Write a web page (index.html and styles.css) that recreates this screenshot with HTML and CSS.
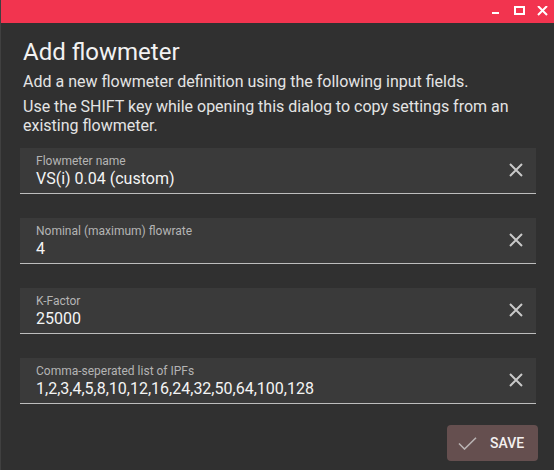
FILE: index.html
```html
<!DOCTYPE html>
<html>
<head>
<meta charset="utf-8">
<link rel="stylesheet" href="styles.css">
</head>
<body>
<div class="window">
  <div class="titlebar">
    <span class="tb-btn">
      <svg width="10" height="10" viewBox="0 0 10 10"><rect x="1" y="6" width="7" height="2" fill="#fff"/></svg>
    </span>
    <span class="tb-btn">
      <svg width="12" height="10" viewBox="0 0 12 10"><rect x="1" y="1" width="9" height="7" fill="none" stroke="#fff" stroke-width="2"/></svg>
    </span>
    <span class="tb-btn">
      <svg width="12" height="10" viewBox="0 0 12 10"><path d="M1 0 L10 9 M10 0 L1 9" stroke="#fff" stroke-width="2"/></svg>
    </span>
  </div>
  <div class="content">
    <h1 class="title">Add flowmeter</h1>
    <p class="desc">Add a new flowmeter definition using the following input fields.</p>
    <p class="desc">Use the SHIFT key while opening this dialog to copy settings from an existing flowmeter.</p>

    <div class="fields">
      <div class="field">
        <div class="field-text">
          <div class="label">Flowmeter name</div>
          <div class="value">VS(i) 0.04 (custom)</div>
        </div>
        <span class="clear"><svg width="14" height="14" viewBox="0 0 14 14"><path d="M1 1 L13 13 M13 1 L1 13" stroke="#c9c9c9" stroke-width="2"/></svg></span>
      </div>
      <div class="field">
        <div class="field-text">
          <div class="label">Nominal (maximum) flowrate</div>
          <div class="value">4</div>
        </div>
        <span class="clear"><svg width="14" height="14" viewBox="0 0 14 14"><path d="M1 1 L13 13 M13 1 L1 13" stroke="#c9c9c9" stroke-width="2"/></svg></span>
      </div>
      <div class="field">
        <div class="field-text">
          <div class="label">K-Factor</div>
          <div class="value">25000</div>
        </div>
        <span class="clear"><svg width="14" height="14" viewBox="0 0 14 14"><path d="M1 1 L13 13 M13 1 L1 13" stroke="#c9c9c9" stroke-width="2"/></svg></span>
      </div>
      <div class="field">
        <div class="field-text">
          <div class="label">Comma-seperated list of IPFs</div>
          <div class="value">1,2,3,4,5,8,10,12,16,24,32,50,64,100,128</div>
        </div>
        <span class="clear"><svg width="14" height="14" viewBox="0 0 14 14"><path d="M1 1 L13 13 M13 1 L1 13" stroke="#c9c9c9" stroke-width="2"/></svg></span>
      </div>
    </div>

    <div class="actions">
      <button class="save">
        <svg width="19" height="13" viewBox="0 0 19 13"><path d="M1 6.5 L6.5 12 L18 0.8" fill="none" stroke="#b9b3b3" stroke-width="1.6"/></svg>
        <span>SAVE</span>
      </button>
    </div>
  </div>
</div>
</body>
</html>
```

FILE: styles.css
```css
html, body {
  margin: 0;
  padding: 0;
  background: #303030;
}
body {
  font-family: Roboto, "Liberation Sans", sans-serif;
  width: 554px;
  height: 470px;
  overflow: hidden;
}
.window {
  height: 470px;
  border-left: 1px solid #404040;
  box-sizing: border-box;
}
.titlebar {
  height: 23px;
  background: #f2344f;
  display: flex;
  justify-content: flex-end;
  align-items: flex-start;
  padding-top: 6px;
  padding-right: 5px;
  box-sizing: border-box;
  gap: 11px;
}
.tb-btn {
  display: flex;
  width: 12px;
  height: 10px;
}
.content {
  padding: 0 18px 0 19px;
  display: flex;
  flex-direction: column;
}
.title {
  margin: 15px 0 0 3px;
  font-size: 24px;
  line-height: 28px;
  font-weight: 400;
  color: #f2f2f2;
}
.desc {
  margin: 6px 0 0 3px;
  font-size: 16px;
  line-height: 19px;
  color: #e4e4e4;
}
.fields {
  margin-top: 13px;
  display: flex;
  flex-direction: column;
  gap: 24px;
}
.field {
  height: 46px;
  box-sizing: border-box;
  background: #3a3a3a;
  border-bottom: 1px solid #bdbdbd;
  display: flex;
  align-items: center;
  padding: 0 13px 0 16px;
}
.field-text {
  flex: 1;
  align-self: flex-start;
  padding-top: 6px;
}
.label {
  font-size: 12px;
  line-height: 14px;
  color: #b4b4b4;
}
.value {
  margin-top: 1px;
  font-size: 16px;
  line-height: 20px;
  color: #f4f4f4;
}
.clear {
  display: flex;
  width: 14px;
  height: 14px;
  margin-top: -1px;
}
.actions {
  display: flex;
  justify-content: flex-end;
  margin-top: 21px;
  margin-right: -2px;
}
.save {
  width: 91px;
  height: 36px;
  border: none;
  border-radius: 4px;
  background: #654f4f;
  color: #f4f0f0;
  font-family: Roboto, "Liberation Sans", sans-serif;
  font-size: 14px;
  font-weight: 500;
  display: flex;
  align-items: center;
  padding: 0 0 0 11px;
  gap: 13px;
}
```
